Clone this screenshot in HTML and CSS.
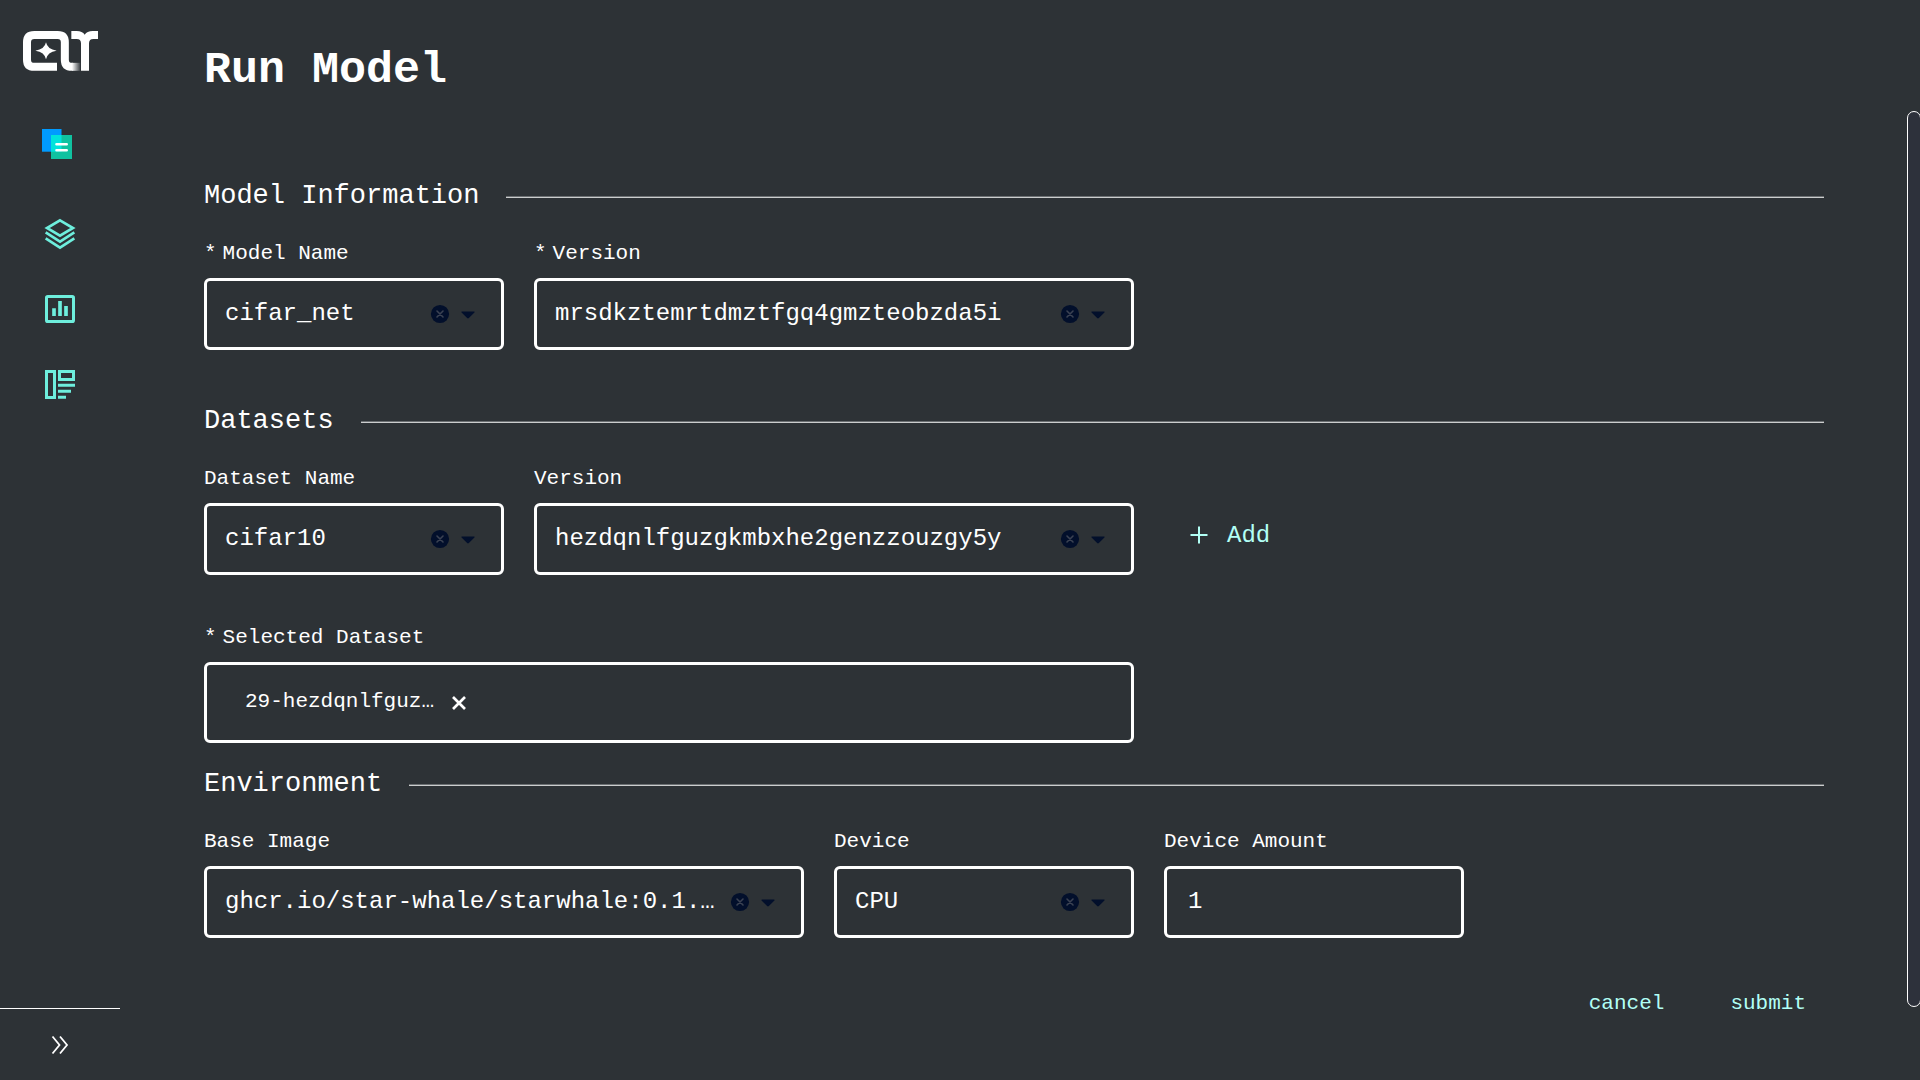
FILE: index.html
```html
<!DOCTYPE html>
<html lang="en">
<head>
<meta charset="utf-8">
<title>Run Model</title>
<link rel="stylesheet" href="styles.css">
</head>
<body>
<svg class="sprite" aria-hidden="true">
  <symbol id="clear" viewBox="0 0 20 20">
    <circle cx="10" cy="10" r="9.1" fill="#020f2b"/>
    <path d="M7 7l6 6M13 7l-6 6" stroke="#3b4252" stroke-width="1.6" stroke-linecap="round"/>
  </symbol>
  <symbol id="caret" viewBox="0 0 24 24">
    <path fill="#020f2b" d="M12.7071 15.2929L17.1464 10.8536C17.4614 10.5386 17.2383 10 16.7929 10L7.20711 10C6.76165 10 6.53857 10.5386 6.85355 10.8536L11.2929 15.2929C11.6834 15.6834 12.3166 15.6834 12.7071 15.2929Z"/>
  </symbol>
</svg>
<div class="app">
  <nav class="sidebar">
    <a class="logo">
      <svg width="77" height="42" viewBox="66 60 231 126">
        <defs><linearGradient id="fade" gradientUnits="userSpaceOnUse" x1="216" y1="0" x2="241" y2="0"><stop offset="0" stop-color="#fff"/><stop offset="1" stop-color="#3c4145"/></linearGradient></defs>
        <path d="M171 170.500H103Q81 170.500 81 149V97Q81 75 103 75H173Q194.500 75 194.500 97V149Q194.500 170.500 216 170.500H218" fill="none" stroke="#fff" stroke-width="24"/>
        <rect x="216" y="158.500" width="25" height="24" fill="url(#fade)"/>
        <path d="M214 63H230Q247 63 254 74Q261 63 278 63H294V87H280Q267 87 267 100V182.500H243V100Q243 87 230 87H214Z" fill="#fff"/>
        <path d="M138 97Q142 118 170 122Q142 126 138 148Q134 126 106 122Q134 118 138 97Z" fill="#fff"/>
      </svg>
    </a>
    <a class="project">
      <svg width="30" height="30" viewBox="0 0 30 30">
        <rect width="19.500" height="22.700" fill="#009bff"/>
        <rect x="9" y="6" width="21" height="24" fill="#10c2a0"/>
        <rect x="9" y="6" width="10.500" height="16.700" fill="#00e3dc"/>
        <path d="M14.500 15.200h10.200M14.500 21.200h10.200" stroke="#fff" stroke-width="2.600" stroke-linecap="round"/>
      </svg>
    </a>
    <a class="nav-item">
      <svg width="30" height="30" viewBox="45 57 90 90"><path d="M90 61L129 84L90 107L51 84ZM47 97L90 125L133 97M47 115L90 143L133 115"/></svg>
    </a>
    <a class="nav-item">
      <svg width="30" height="30" viewBox="45 282 90 90"><rect x="49.500" y="289.500" width="81" height="75" rx="4"/><path d="M72 325V348M90 303V348M108 318V348" stroke-width="11"/></svg>
    </a>
    <a class="nav-item">
      <svg width="30" height="30" viewBox="45 507 90 90"><path d="M49.500 514.500H73.500V592.500H49.500ZM88.500 514.500H130.500V538.500H88.500ZM84 556H135M84 574H123M84 592H108"/></svg>
    </a>
    <button class="collapse" aria-label="Expand menu">
      <svg width="18" height="20" viewBox="0 0 18 20"><path d="M1.500 1.500L8.500 10L1.500 18.500M9 1.500L16 10L9 18.500"/></svg>
    </button>
  </nav>

  <main class="page">
    <h1>Run Model</h1>
    <form class="form">
      <section class="section">
        <h2>Model Information</h2>
        <div class="row">
          <div class="field"><label><i>*</i>Model Name</label>
            <div class="control"><span>cifar_net</span><svg class="clear"><use href="#clear"/></svg><svg class="caret"><use href="#caret"/></svg></div></div>
          <div class="field wide"><label><i>*</i>Version</label>
            <div class="control"><span>mrsdkztemrtdmztfgq4gmzteobzda5i</span><svg class="clear"><use href="#clear"/></svg><svg class="caret"><use href="#caret"/></svg></div></div>
        </div>
      </section>

      <section class="section">
        <h2>Datasets</h2>
        <div class="row">
          <div class="field"><label>Dataset Name</label>
            <div class="control"><span>cifar10</span><svg class="clear"><use href="#clear"/></svg><svg class="caret"><use href="#caret"/></svg></div></div>
          <div class="field wide"><label>Version</label>
            <div class="control"><span>hezdqnlfguzgkmbxhe2genzzouzgy5y</span><svg class="clear"><use href="#clear"/></svg><svg class="caret"><use href="#caret"/></svg></div></div>
          <button class="add" type="button">
            <svg width="18" height="18" viewBox="0 0 18 18"><path d="M9 .5V17.500M.5 9H17.500"/></svg>Add
          </button>
        </div>
        <div class="row selected">
          <div class="field full"><label><i>*</i>Selected Dataset</label>
            <div class="control tags"><span class="tag">29-hezdqnlfguz…</span><svg class="remove" viewBox="0 0 16 16"><path d="M2 2L14 14M14 2L2 14"/></svg></div></div>
        </div>
      </section>

      <section class="section environment">
        <h2>Environment</h2>
        <div class="row">
          <div class="field wide"><label>Base Image</label>
            <div class="control"><span>ghcr.io/star-whale/starwhale:0.1.…</span><svg class="clear"><use href="#clear"/></svg><svg class="caret"><use href="#caret"/></svg></div></div>
          <div class="field"><label>Device</label>
            <div class="control"><span>CPU</span><svg class="clear"><use href="#clear"/></svg><svg class="caret"><use href="#caret"/></svg></div></div>
          <div class="field"><label>Device Amount</label>
            <div class="control amount"><span>1</span></div></div>
        </div>
      </section>

      <div class="actions"><button type="button">cancel</button><button type="button">submit</button></div>
    </form>
  </main>
  <div class="scroll"><div class="thumb"></div></div>
</div>
</body>
</html>
```

FILE: styles.css
```css
* { box-sizing: border-box; }
body {
  margin: 0;
  background: #2d3236;
  color: #fff;
  font-family: "Liberation Mono", monospace;
  overflow: hidden;
}
button { background: none; border: 0; padding: 0; color: inherit; font: inherit; }
svg { display: block; flex: none; }
.sprite { display: none; }
.app { display: flex; height: 1080px; }

.sidebar { width: 120px; display: flex; flex-direction: column; }
.logo { padding: 30px 0 0 22px; }
.project { padding: 57px 0 60px 42px; }
.nav-item { padding-left: 45px; margin-bottom: 45px; }
.nav-item svg { fill: none; stroke: #6eeedd; stroke-width: 9; }
.nav-item:nth-child(3) svg { stroke-width: 8; overflow: visible; }
.collapse {
  margin-top: auto;
  height: 72px;
  border-top: 1px solid #fff;
  display: flex;
  align-items: center;
  justify-content: center;
}
.collapse svg { fill: none; stroke: #fff; stroke-width: 1.8; }

.page { width: 1704px; padding: 41px 0 0 84px; }
h1 { margin: 0; font-size: 45px; line-height: 60px; font-weight: 700; }
.form { width: 1620px; padding-top: 77px; }
.section { margin-bottom: 53px; }
h2 {
  margin: 0 0 22px;
  display: flex;
  align-items: center;
  gap: 27px;
  font-size: 27px;
  line-height: 36px;
  font-weight: 400;
}
h2::after {
  content: "";
  flex: 1;
  height: 2px;
  margin-top: 2px;
  background: linear-gradient(#6b6f72 50%, #cbcdce 50%);
}
.row { display: flex; gap: 30px; }
.field { width: 300px; }
.wide { width: 600px; }
.full { width: 930px; }
label { display: block; font-size: 21px; line-height: 36px; margin-bottom: 6px; }
label i { font-style: normal; margin-right: 6px; }
.control {
  height: 72px;
  border: 3px solid #fff;
  border-radius: 6px;
  padding: 0 18px;
  display: flex;
  align-items: center;
  font-size: 24px;
  white-space: nowrap;
}
.control > span:first-child { flex: 1; padding-bottom: 2px; }
.clear { width: 20px; height: 20px; margin-bottom: 1px; }
.caret { width: 30px; height: 30px; margin: 0 0 1px 3.5px; }
.amount { padding-left: 21px; }
.add {
  align-self: flex-end;
  height: 72px;
  margin: 0 0 4px 25.5px;
  display: flex;
  align-items: center;
  gap: 19.5px;
  font-size: 24px;
  color: #b2fff5;
}
.add svg { stroke: #b2fff5; stroke-width: 2; }
.selected { margin-top: 45px; }
.tags { height: 81px; padding: 0 0 3px 38px; font-size: 21px; }
.tags > .tag:first-child { flex: none; padding-bottom: 0; }
.remove { width: 16px; height: 16px; margin: 3px 0 0 17px; fill: none; stroke: #fff; stroke-width: 2.7; }
.environment { margin: -30px 0 0; }
.actions { display: flex; justify-content: flex-end; gap: 30px; padding-top: 46px; }
.actions button { padding: 0 18px; font-size: 21px; line-height: 40px; color: #b2fff5; }

.scroll { width: 96px; padding: 111px 0 0 83px; overflow: hidden; }
.thumb { width: 14px; height: 896px; border: 1px solid #fff; border-radius: 7px; background: #2d313b; }
```
